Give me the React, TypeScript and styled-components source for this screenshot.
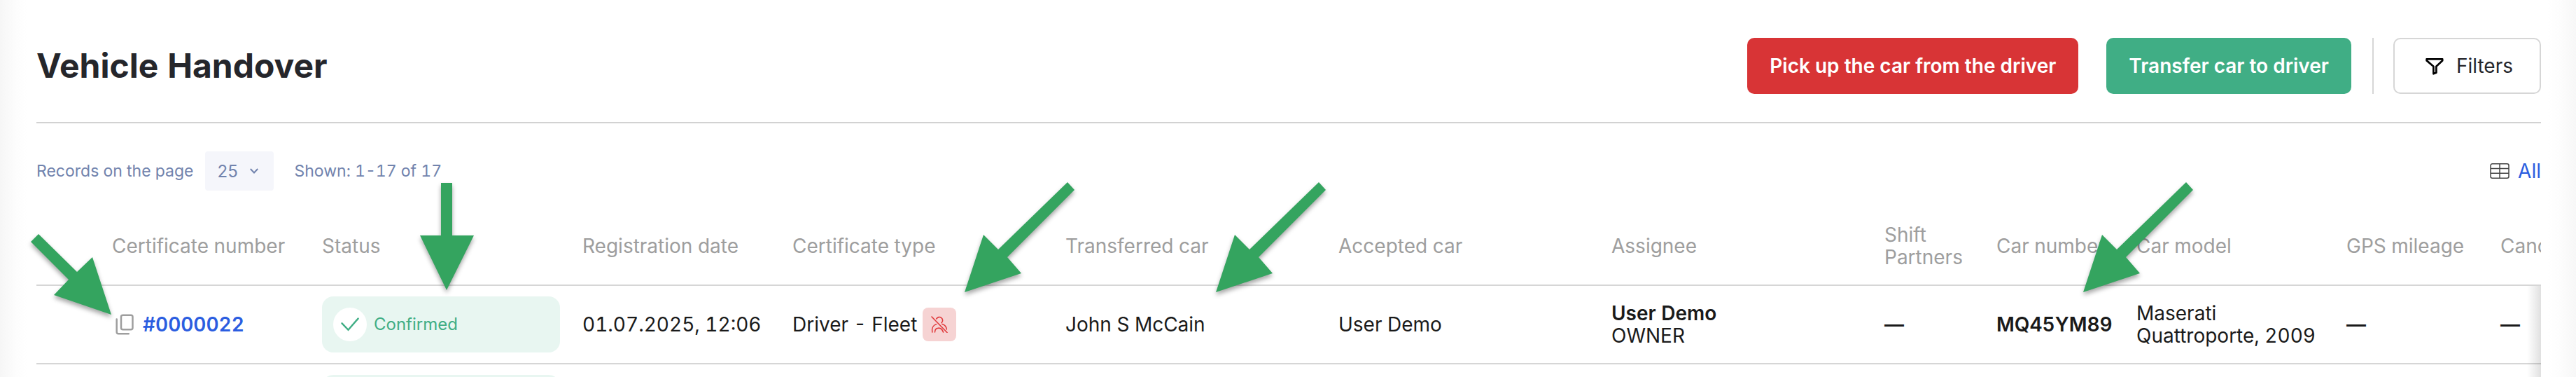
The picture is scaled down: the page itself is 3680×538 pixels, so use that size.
import React from "react";
import styled, { createGlobalStyle, css } from "styled-components";

const GlobalStyle = createGlobalStyle`
  *, *::before, *::after { box-sizing: border-box; }
  body {
    margin: 0;
    background: #fff;
    font-family: Inter, "Noto Sans", sans-serif;
    font-variant-numeric: tabular-nums;
  }
  button, select { font-family: inherit; margin: 0; }
`;

const Page = styled.main`
  position: relative;
  height: 100vh;
  overflow: hidden;
  padding: 0 50px 0 52px;
  color: #1a1a1a;
  font-size: 28px;
  line-height: 32px;
  background:
    linear-gradient(to right, #f6f6f6, #fdfdfd 24px, #fff 40px) left / 50% 100% no-repeat,
    linear-gradient(to left, #f7f7f7, #fdfdfd 24px, #fff 40px) right / 50% 100% no-repeat;
`;

const Header = styled.header`
  display: flex;
  align-items: center;
  justify-content: space-between;
  padding: 54px 0 40px;
  border-bottom: 2px solid #d2d2d2;
`;

const Title = styled.h1`
  margin: 0;
  font-size: 48px;
  line-height: 56px;
  font-weight: 700;
  color: #25262b;
`;

const Actions = styled.div`
  display: flex;
  align-items: center;
`;

const Button = styled.button<{ $tone: "danger" | "success" | "plain" }>`
  display: inline-flex;
  align-items: center;
  justify-content: center;
  gap: 18px;
  height: 80px;
  padding: 0 32px;
  border: 0;
  border-radius: 10px;
  font-size: 28px;
  line-height: 32px;
  font-weight: 600;
  color: #fff;
  cursor: pointer;
  ${({ $tone }) => $tone === "danger" && css`background: #d83436; margin-right: 40px;`}
  ${({ $tone }) => $tone === "success" && css`background: #40ae85;`}
  ${({ $tone }) =>
    $tone === "plain" &&
    css`
      padding: 0 38px 0 44px;
      border: 2px solid #d6d6d6;
      background: #fff;
      color: #25262b;
      font-weight: 400;
    `}
`;

const Divider = styled.span`
  width: 2px;
  height: 80px;
  margin: 0 28px 0 30px;
  background: #d6d6d6;
`;

const Toolbar = styled.div`
  display: flex;
  align-items: center;
  padding-top: 40px;
  font-size: 23px;
  color: #7183ad;
`;

const SelectBox = styled.span`
  display: inline-flex;
  align-items: center;
  height: 56px;
  margin: 0 30px 0 16px;
  padding-right: 22px;
  border-radius: 4px;
  background: #f5f6fb;
`;

const Select = styled.select`
  appearance: none;
  width: 64px;
  height: 56px;
  padding: 0 0 0 18px;
  border: 0;
  background: transparent;
  font-size: 24px;
  color: #7183ad;
`;

const AllLink = styled.a`
  display: inline-flex;
  align-items: center;
  gap: 12px;
  margin-left: auto;
  font-size: 28px;
  color: #2b5de0;
  text-decoration: none;
`;

const TableFrame = styled.div`
  position: relative;
  margin-top: 24px;
`;

const EdgeShadow = styled.span`
  position: absolute;
  top: 112px;
  right: 0;
  bottom: 0;
  width: 20px;
  background: linear-gradient(to left, rgba(0, 0, 0, 0.12), rgba(0, 0, 0, 0));
`;

const TableScroll = styled.div`
  overflow-x: auto;
  scrollbar-width: none;
`;

const Table = styled.table`
  table-layout: fixed;
  width: 3740px;
  border-collapse: separate;
  border-spacing: 0;
`;

const Col = styled.col<{ $w: number }>`
  width: ${({ $w }) => $w}px;
`;

const Th = styled.th`
  height: 112px;
  padding: 0 32px 0 0;
  border-bottom: 2px solid #d6d6d6;
  text-align: left;
  font-weight: 400;
  color: #9e9e9e;
`;

const Td = styled.td<{ $tight?: boolean }>`
  height: 112px;
  padding: 0 ${({ $tight }) => ($tight ? 0 : 32)}px 0 0;
  border-bottom: 2px solid #d6d6d6;
`;

const Inline = styled.div`
  display: flex;
  align-items: center;
  gap: 8px;
  white-space: nowrap;
`;

const Strong = styled.strong`
  font-weight: 600;
`;

const NumberLink = styled.a`
  font-weight: 600;
  color: #2b5de0;
  text-decoration: none;
`;

const CopyButton = styled.button`
  display: inline-flex;
  padding: 0;
  border: 0;
  background: none;
  color: #9e9e9e;
  cursor: pointer;
`;

const Status = styled.div`
  display: flex;
  align-items: center;
  gap: 10px;
  height: 80px;
  padding: 0 16px;
  border-radius: 16px;
  background: #e8f6f1;
  font-size: 24px;
  color: #40ae85;
`;

const StatusIcon = styled.span`
  display: flex;
  align-items: center;
  justify-content: center;
  width: 48px;
  height: 48px;
  border-radius: 50%;
  background: #fff;
`;

const NoDriver = styled.span`
  display: flex;
  align-items: center;
  justify-content: center;
  width: 48px;
  height: 48px;
  border-radius: 8px;
  background: #f6d3d3;
`;

const ArrowMark = styled.svg<{ $x: number; $y: number }>`
  position: absolute;
  left: ${({ $x }) => $x}px;
  top: ${({ $y }) => $y}px;
  overflow: visible;
  pointer-events: none;
  filter: drop-shadow(0 4px 3px rgba(0, 0, 0, 0.35));
`;

const FilterIcon = () => (
  <svg width="26" height="26" viewBox="0 0 26 26" fill="none" stroke="#000" strokeWidth="2.7" strokeLinejoin="round" aria-hidden="true">
    <path d="M1.6 3.4h22.600v2L15.400 13.700v9l-4 1.600V13.700L1.600 5.400z" />
  </svg>
);

const GridIcon = () => (
  <svg width="28" height="24" viewBox="0 0 28 24" fill="none" stroke="#444" strokeWidth="1.500" aria-hidden="true">
    <rect x="1" y="1.800" width="26" height="20.400" rx="2.500" />
    <path d="M1 8.500h26M1 15.300h26M14 1.800v20.400" />
  </svg>
);

const Chevron = () => (
  <svg width="12" height="8" viewBox="0 0 12 8" fill="none" stroke="#7183ad" strokeWidth="2" aria-hidden="true">
    <path d="M0.800 1l5.200 5.500L11.200 1" />
  </svg>
);

const CopyIcon = () => (
  <svg width="36" height="32" viewBox="0 0 36 32" fill="none" stroke="currentColor" strokeWidth="2.500" strokeLinecap="round" aria-hidden="true">
    <rect x="13" y="2.700" width="16.500" height="20.600" rx="2.500" />
    <path d="M6.700 8.500v18.200a2.500 2.500 0 0 0 2.500 2.500h14.600" />
  </svg>
);

const CheckIcon = () => (
  <svg width="26" height="20" viewBox="0 0 26 20" fill="none" stroke="#40ae85" strokeWidth="2.400" strokeLinecap="round" aria-hidden="true">
    <path d="M1.500 8.300l9 9.500L24.600 1.600" />
  </svg>
);

const NoDriverIcon = () => (
  <svg width="24" height="24" viewBox="0 0 24 24" fill="none" stroke="#e03a3c" strokeWidth="1.600" strokeLinecap="round" aria-hidden="true">
    <path d="M1 1l22 22.500" />
    <path d="M7.800 4a4.700 4.700 0 1 1 7.300 5.700" />
    <path d="M1.800 23C.8 17.500 3 13 7.500 11.700M16 11.500c3.500 1 6 4 6.300 7.500" />
    <path d="M5.500 23c0-7 9-8.500 12 0" />
  </svg>
);

type Mark = { x: number; y: number; points: string };
const SLANTED = "147,0 157,11 61,107 81,130 0,157 27,75 48,96";
const MARKS: Mark[] = [
  { x: 44, y: 334, points: "11,0 0,11 54,65 33,87 115,115 88,33 66,54" },
  { x: 600, y: 261, points: "30,0 46,0 46,75 77,75 38,153 0,75 30,75" },
  { x: 1378, y: 260, points: SLANTED },
  { x: 1737, y: 260, points: SLANTED },
  { x: 2976, y: 260, points: SLANTED },
];

const COLUMNS: [string, number][] = [
  ["", 108],
  ["Certificate number", 300],
  ["Status", 372],
  ["Registration date", 300],
  ["Certificate type", 390],
  ["Transferred car", 390],
  ["Accepted car", 390],
  ["Assignee", 390],
  ["Shift Partners", 160],
  ["Car number", 200],
  ["Car model", 300],
  ["GPS mileage", 220],
  ["Canceled", 220],
];

export default function App() {
  return (
    <Page>
      <GlobalStyle />
      <Header>
        <Title>Vehicle Handover</Title>
        <Actions>
          <Button type="button" $tone="danger">Pick up the car from the driver</Button>
          <Button type="button" $tone="success">Transfer car to driver</Button>
          <Divider />
          <Button type="button" $tone="plain">
            <FilterIcon />
            Filters
          </Button>
        </Actions>
      </Header>

      <Toolbar>
        <label htmlFor="page-size">Records on the page</label>
        <SelectBox>
          <Select id="page-size" defaultValue="25">
            <option value="25">25</option>
          </Select>
          <Chevron />
        </SelectBox>
        <span>Shown: 1-17 of 17</span>
        <AllLink href="#all">
          <GridIcon />
          All
        </AllLink>
      </Toolbar>

      <TableFrame>
        <TableScroll>
          <Table>
            <colgroup>
              {COLUMNS.map(([name, width]) => (
                <Col key={name} $w={width} />
              ))}
            </colgroup>
            <thead>
              <tr>
                {COLUMNS.map(([name]) => (
                  <Th key={name} scope="col">{name}</Th>
                ))}
              </tr>
            </thead>
            <tbody>
              <tr>
                <Td />
                <Td $tight>
                  <Inline>
                    <CopyButton type="button" aria-label="Copy number"><CopyIcon /></CopyButton>
                    <NumberLink href="#0000022">#0000022</NumberLink>
                  </Inline>
                </Td>
                <Td>
                  <Status>
                    <StatusIcon><CheckIcon /></StatusIcon>
                    Confirmed
                  </Status>
                </Td>
                <Td $tight>01.07.2025, 12:06</Td>
                <Td>
                  <Inline>
                    Driver - Fleet
                    <NoDriver><NoDriverIcon /></NoDriver>
                  </Inline>
                </Td>
                <Td>John S McCain</Td>
                <Td>User Demo</Td>
                <Td>
                  <Strong>User Demo</Strong>
                  <br />
                  OWNER
                </Td>
                <Td><Strong>—</Strong></Td>
                <Td $tight><Strong>MQ45YM89</Strong></Td>
                <Td>Maserati Quattroporte, 2009</Td>
                <Td><Strong>—</Strong></Td>
                <Td><Strong>—</Strong></Td>
              </tr>
              <tr>
                <Td colSpan={2} />
                <Td><Status /></Td>
                <Td colSpan={10} />
              </tr>
            </tbody>
          </Table>
        </TableScroll>
        <EdgeShadow />
      </TableFrame>

      {MARKS.map(({ x, y, points }) => (
        <ArrowMark key={x} $x={x} $y={y} width="160" height="160" aria-hidden="true">
          <polygon points={points} fill="#34a45f" />
        </ArrowMark>
      ))}
    </Page>
  );
}
